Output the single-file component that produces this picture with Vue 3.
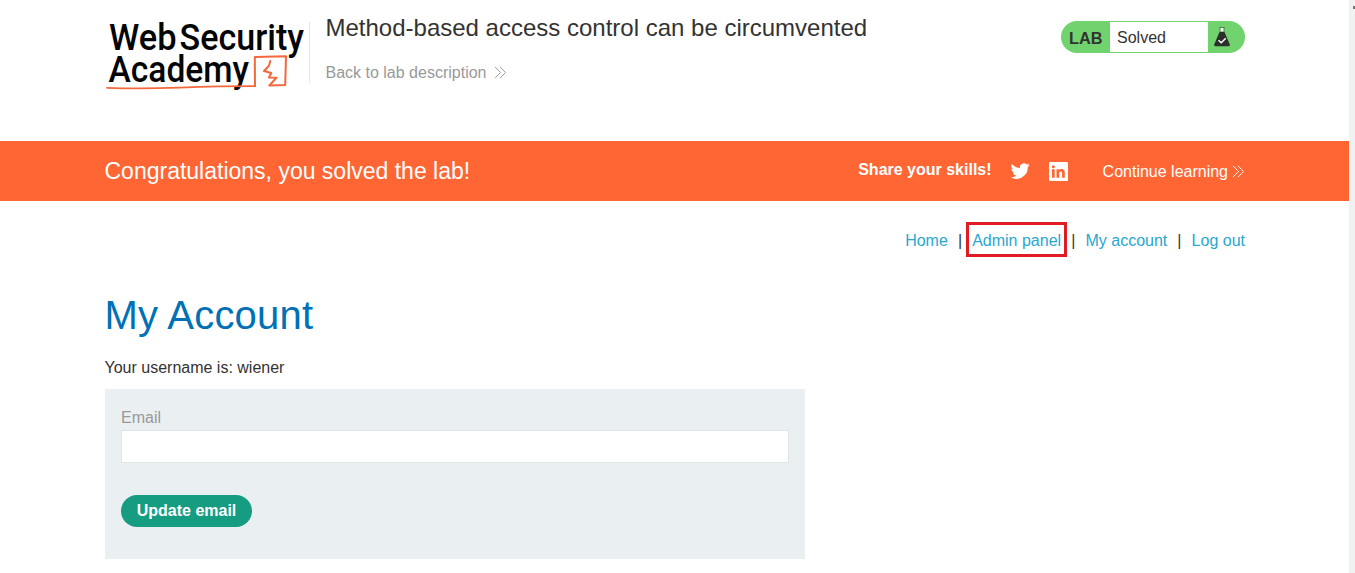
<script setup>
const links = [
  { label: 'Home', marked: false },
  { label: 'Admin panel', marked: true },
  { label: 'My account', marked: false },
  { label: 'Log out', marked: false },
]
</script>

<template>
  <div class="page">
    <div class="content">
      <header class="top">
        <svg class="logo" viewBox="104 18 201 76" width="201" height="76">
          <text x="109" y="49.5" textLength="67.5" lengthAdjust="spacingAndGlyphs">Web</text>
          <text x="179.5" y="49.5" textLength="124.5" lengthAdjust="spacingAndGlyphs">Security</text>
          <text x="108.5" y="82" textLength="140.5" lengthAdjust="spacingAndGlyphs">Academy</text>
          <g fill="none" stroke="#f4683c" stroke-linejoin="round" stroke-linecap="round">
            <path d="M107 87.8 Q140 89 180 87.6 T255 86.2" stroke-width="1.7" />
            <path d="M255 86.2 L254.8 57 L286 56.2 L285.2 85 L269.5 85.5" stroke-width="2" />
            <path d="M270.3 61 L268.8 66 L264 71 L271.3 73 L269 77.5 L276.5 77.8 L269.5 85.3" stroke-width="2" />
          </g>
        </svg>
        <div class="titles">
          <h2>Method-based access control can be circumvented</h2>
          <a class="back">
            <span>Back to lab description</span>
            <svg class="chev" viewBox="0 0 13 13" width="13" height="13"><path d="M1 .8 L6.5 6.5 L1 12.2 M6 .8 L11.5 6.5 L6 12.2" /></svg>
          </a>
        </div>
        <div class="status">
          <b>LAB</b>
          <p>Solved</p>
          <svg class="flask" viewBox="0 0 18 22" width="18" height="22">
            <path d="M6.2 1.5 H11.8 M7 2 V6 H11 V2" fill="#e8ffe5" stroke="#52744f" stroke-width=".9" />
            <path d="M6.5 6 H11.5 L16.7 18.2 Q17.3 20.3 15 20.3 H3 Q.7 20.3 1.3 18.2 Z" fill="#2b302b" />
            <path d="M5.5 14.2 L8.2 16.7 L12.8 12.2" fill="none" stroke="#fff" stroke-width="1.5" />
          </svg>
        </div>
      </header>
    </div>
    <section class="banner">
      <div class="content bar">
        <h4>Congratulations, you solved the lab!</h4>
        <b class="share">Share your skills!</b>
        <svg class="tw" viewBox="0 0 24 24" width="20" height="20"><path fill="#fff" d="M23.6 4.9c-.9.4-1.8.7-2.7.8 1-.6 1.7-1.5 2.1-2.6-.9.5-1.9.9-3 1.100A4.700 4.700 0 0 0 12 8.500C8.100 8.300 4.600 6.400 2.300 3.600c-1.300 2.200-.6 4.900 1.500 6.300-.8 0-1.500-.2-2.100-.6 0 2.300 1.600 4.200 3.800 4.700-.7.2-1.400.2-2.100.1.600 1.900 2.300 3.200 4.400 3.300A9.500 9.500 0 0 1 .8 19.300 13.400 13.400 0 0 0 21.300 7.400c.9-.7 1.700-1.500 2.300-2.500z" /></svg>
        <svg class="li" viewBox="0 0 19 19" width="19" height="19">
          <rect width="19" height="19" rx="1" fill="#fff" />
          <path fill="#ff6633" d="M3 7.300h2.700v8.500H3zM4.350 3.200a1.500 1.500 0 1 1 0 3 1.500 1.500 0 0 1 0-3zM7.500 7.300h2.500v1.200c.5-.9 1.400-1.400 2.600-1.400 2.500 0 3.200 1.600 3.200 4v4.700h-2.700v-4.200c0-1.200-.2-2.200-1.400-2.200s-1.500.9-1.500 2.100v4.300H7.500z" />
        </svg>
        <a class="cont">
          <span>Continue learning</span>
          <svg class="chev" viewBox="0 0 13 13" width="13" height="13"><path d="M1 .8 L6.5 6.5 L1 12.2 M6 .8 L11.5 6.5 L6 12.2" /></svg>
        </a>
      </div>
    </section>
    <main class="content">
      <nav>
        <template v-for="(l, i) in links" :key="l.label">
          <i v-if="i" class="sep">|</i>
          <a :class="{ marked: l.marked }">{{ l.label }}</a>
        </template>
      </nav>
      <h1>My Account</h1>
      <p class="user">Your username is: wiener</p>
      <form>
        <label for="email">Email</label>
        <input id="email" type="email" />
        <button type="button">Update email</button>
      </form>
    </main>
    <div class="scroll"></div>
  </div>
</template>

<style>
html, body { margin: 0; overflow: hidden; background: #fff; }
</style>

<style scoped>
.page { position: relative; height: 573px; padding-right: 6px; box-sizing: border-box; font: 16px/20px "Liberation Sans", Arial, sans-serif; color: #333332; overflow: hidden; }
.content { width: 1140px; margin-left: 105px; }
h1, h2, h4, p { margin: 0; font-weight: 400; }
.top { height: 141px; display: flex; align-items: flex-start; }
.logo { margin: 18px 0 0 -1px; flex: none; overflow: visible; }
.logo text { font: 500 37.5px Roboto, sans-serif; fill: #050505; }
.titles { margin: 22px 0 0 4px; height: 61px; padding-left: 15px; border-left: 1px solid #e4e7e8; }
h2 { font-size: 24px; line-height: 28px; margin: -8px 0 0 .5px; white-space: nowrap; }
.back { display: flex; align-items: center; margin: 21px 0 0 .5px; color: #999; }
.chev { fill: none; stroke: currentColor; stroke-width: 1; margin-top: -2px; }
.back .chev { margin-left: 8px; }
.status { margin: 21px 0 0 auto; width: 184px; height: 32px; border-radius: 16px; background: #70d36d; display: flex; align-items: center; overflow: hidden; }
.status b { width: 49px; padding: 2px 0 0 8px; box-sizing: border-box; line-height: 20px; font-size: 16.3px; }
.status p { width: 98px; height: 30px; line-height: 31px; padding-left: 7px; box-sizing: border-box; background: #fff; }
.flask { margin-left: 5px; }
.banner { height: 60px; background: #ff6633; color: #fff; }
.bar { height: 60px; display: flex; align-items: center; }
h4 { font-size: 23px; line-height: 28px; white-space: nowrap; margin-left: -.5px; }
.share { margin: -3px 0 0 auto; }
.tw { margin-left: 18px; }
.li { margin: 1px 0 0 19px; }
.cont { display: flex; align-items: center; margin: 2px 0 0 35px; color: #fff; }
.cont .chev { margin-left: 4px; }
nav { height: 35px; margin-top: 22px; display: flex; justify-content: flex-end; align-items: center; color: #29a7cf; }
.sep { font-style: normal; color: #333332; margin: 0 10.1px; }
.marked { position: relative; }
.marked::after { content: ""; position: absolute; left: -6px; right: -6px; top: -9px; height: 29px; border: 3px solid #e01b24; }
h1 { font-size: 40px; line-height: 48px; letter-spacing: .2px; color: #0071b5; margin: 33px 0 0 -.5px; }
.user { margin: 19px 0 0 -.5px; }
form { width: 700px; height: 170px; margin-top: 11px; padding: 19px 16px 0; box-sizing: border-box; background: #eaeff2; }
label { display: block; color: #999; }
input { display: block; width: 668px; height: 33px; margin: 2px 0 32px; box-sizing: border-box; border: 1px solid #dfe5e7; background: #fff; }
button { width: 131px; height: 32px; border: 0; border-radius: 16px; padding: 0; background: #169c80; color: #fff; font: bold 16px "Liberation Sans", Arial, sans-serif; }
.scroll { position: absolute; right: 0; top: 0; width: 6px; height: 573px; background: #f0f1f1; }
.scroll::before { content: ""; position: absolute; right: 0; top: 6px; width: 2px; height: 3px; background: #777; }
</style>
